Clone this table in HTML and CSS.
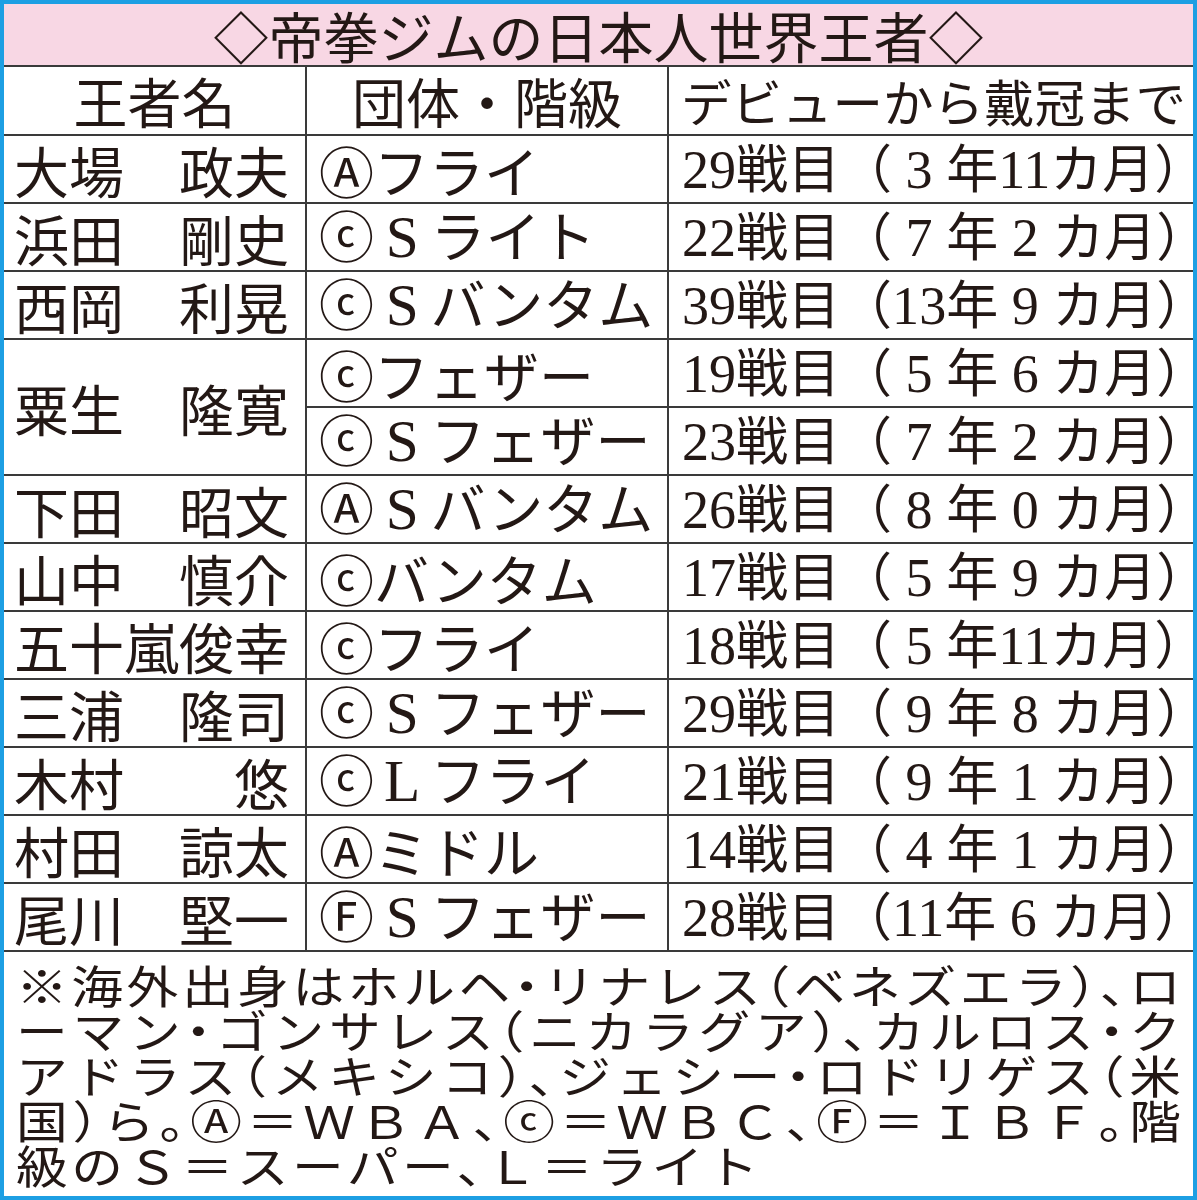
FILE: index.html
```html
<!DOCTYPE html>
<html lang="ja">
<head>
<meta charset="utf-8">
<title>帝拳ジムの日本人世界王者</title>
<link rel="stylesheet" href="styles.css">
</head>
<body>
<div class="frame">
  <div class="title">◇帝拳ジムの日本人世界王者◇</div>
  <table class="champs">
    <colgroup><col class="c1"><col class="c2"><col class="c3"></colgroup>
    <thead>
      <tr><th>王者名</th><th>団体・階級</th><th class="h3">デビューから戴冠まで</th></tr>
    </thead>
    <tbody>
      <tr><td class="name">大場　政夫</td><td class="cls">Ⓐフライ</td><td class="car"><span class="n">29</span>戦目（<span class="d">3</span>年<span class="n">11</span>カ月<span class="cp">）</span></td></tr>
      <tr><td class="name">浜田　剛史</td><td class="cls">ⓒ<span class="d">S</span>ライト</td><td class="car"><span class="n">22</span>戦目（<span class="d">7</span>年<span class="d">2</span>カ月<span class="cp">）</span></td></tr>
      <tr><td class="name">西岡　利晃</td><td class="cls">ⓒ<span class="d">S</span>バンタム</td><td class="car"><span class="n">39</span>戦目（<span class="n">13</span>年<span class="d">9</span>カ月<span class="cp">）</span></td></tr>
      <tr><td class="name" rowspan="2">粟生　隆寛</td><td class="cls">ⓒフェザー</td><td class="car"><span class="n">19</span>戦目（<span class="d">5</span>年<span class="d">6</span>カ月<span class="cp">）</span></td></tr>
      <tr><td class="cls">ⓒ<span class="d">S</span>フェザー</td><td class="car"><span class="n">23</span>戦目（<span class="d">7</span>年<span class="d">2</span>カ月<span class="cp">）</span></td></tr>
      <tr><td class="name">下田　昭文</td><td class="cls">Ⓐ<span class="d">S</span>バンタム</td><td class="car"><span class="n">26</span>戦目（<span class="d">8</span>年<span class="d">0</span>カ月<span class="cp">）</span></td></tr>
      <tr><td class="name">山中　慎介</td><td class="cls">ⓒバンタム</td><td class="car"><span class="n">17</span>戦目（<span class="d">5</span>年<span class="d">9</span>カ月<span class="cp">）</span></td></tr>
      <tr><td class="name">五十嵐俊幸</td><td class="cls">ⓒフライ</td><td class="car"><span class="n">18</span>戦目（<span class="d">5</span>年<span class="n">11</span>カ月<span class="cp">）</span></td></tr>
      <tr><td class="name">三浦　隆司</td><td class="cls">ⓒ<span class="d">S</span>フェザー</td><td class="car"><span class="n">29</span>戦目（<span class="d">9</span>年<span class="d">8</span>カ月<span class="cp">）</span></td></tr>
      <tr><td class="name">木村　　悠</td><td class="cls">ⓒ<span class="d">L</span>フライ</td><td class="car"><span class="n">21</span>戦目（<span class="d">9</span>年<span class="d">1</span>カ月<span class="cp">）</span></td></tr>
      <tr><td class="name">村田　諒太</td><td class="cls">Ⓐミドル</td><td class="car"><span class="n">14</span>戦目（<span class="d">4</span>年<span class="d">1</span>カ月<span class="cp">）</span></td></tr>
      <tr><td class="name">尾川　堅一</td><td class="cls">Ⓕ<span class="d">S</span>フェザー</td><td class="car"><span class="n">28</span>戦目（<span class="n">11</span>年<span class="d">6</span>カ月<span class="cp">）</span></td></tr>
    </tbody>
  </table>
  <div class="note">
    <div class="note-body">
      <div class="ln">※海外出身はホルヘ・リナレス（ベネズエラ）、ロ</div>
      <div class="ln">ーマン・ゴンサレス（ニカラグア）、カルロス・ク</div>
      <div class="ln">アドラス（メキシコ）、ジェシー・ロドリゲス（米</div>
      <div class="ln">国）ら。Ⓐ＝ＷＢＡ、ⓒ＝ＷＢＣ、Ⓕ＝ＩＢＦ。階</div>
      <div class="ln last">級のＳ＝スーパー、Ｌ＝ライト</div>
    </div>
  </div>
</div>
</body>
</html>
```

FILE: styles.css
```css
* { box-sizing: border-box; }

body {
  margin: 0;
  background: #ffffff;
}

.frame {
  width: 1197px;
  height: 1200px;
  border: 4px solid #1d9fe3;
  background: #ffffff;
  color: #231815;
  font-family: "Noto Sans CJK JP", "Noto Sans", sans-serif;
  display: flex;
  flex-direction: column;
  overflow: hidden;
}

.title {
  flex: none;
  height: 63px;
  background: #f8d7e4;
  border-bottom: 2px solid #3a3a3a;
  font-size: 55px;
  line-height: 60px;
  text-align: center;
  white-space: nowrap;
}

.champs {
  flex: none;
  width: 100%;
  border-collapse: collapse;
  table-layout: fixed;
}

.champs col.c1 { width: 302px; }
.champs col.c2 { width: 362px; }

.champs tr { height: 68px; }

.champs th,
.champs td {
  padding: 0;
  border: 2px solid #3a3a3a;
  font-weight: 400;
  white-space: nowrap;
  vertical-align: middle;
  line-height: 1;
}

.champs thead th { border-top: none; }
.champs th:first-child,
.champs td:first-child { border-left: none; }
.champs th:last-child,
.champs td:last-child { border-right: none; }

.champs th {
  font-size: 54px;
  text-align: center;
}

.champs th.h3 {
  font-size: 50.5px;
  text-align: left;
  padding-left: 12px;
}

.name {
  font-size: 55px;
  padding-left: 10px !important;
  text-align: left;
}

.cls {
  font-size: 55px;
  padding-left: 12px !important;
}

.car {
  font-size: 52px;
  padding-left: 13px !important;
}

.cp {
  font-feature-settings: "halt";
}

.n {
  font-family: "Liberation Serif", serif;
  font-size: 1.04em;
}

.d {
  display: inline-block;
  width: 1em;
  text-align: center;
  font-family: "Liberation Serif", serif;
  font-size: 1.04em;
}

.cls .d {
  font-size: 1.08em;
  width: 0.95em;
}

.note {
  flex: 1;
  padding: 10px 12px 0 12px;
}

.note-body {
  width: 1013px;
  font-size: 45px;
  line-height: 45px;
  font-feature-settings: "halt";
  transform: scaleX(1.15);
  transform-origin: left top;
}

.note .ln {
  text-align: justify;
  text-align-last: justify;
}

.note .ln.last {
  text-align-last: left;
  letter-spacing: 3px;
}
```
